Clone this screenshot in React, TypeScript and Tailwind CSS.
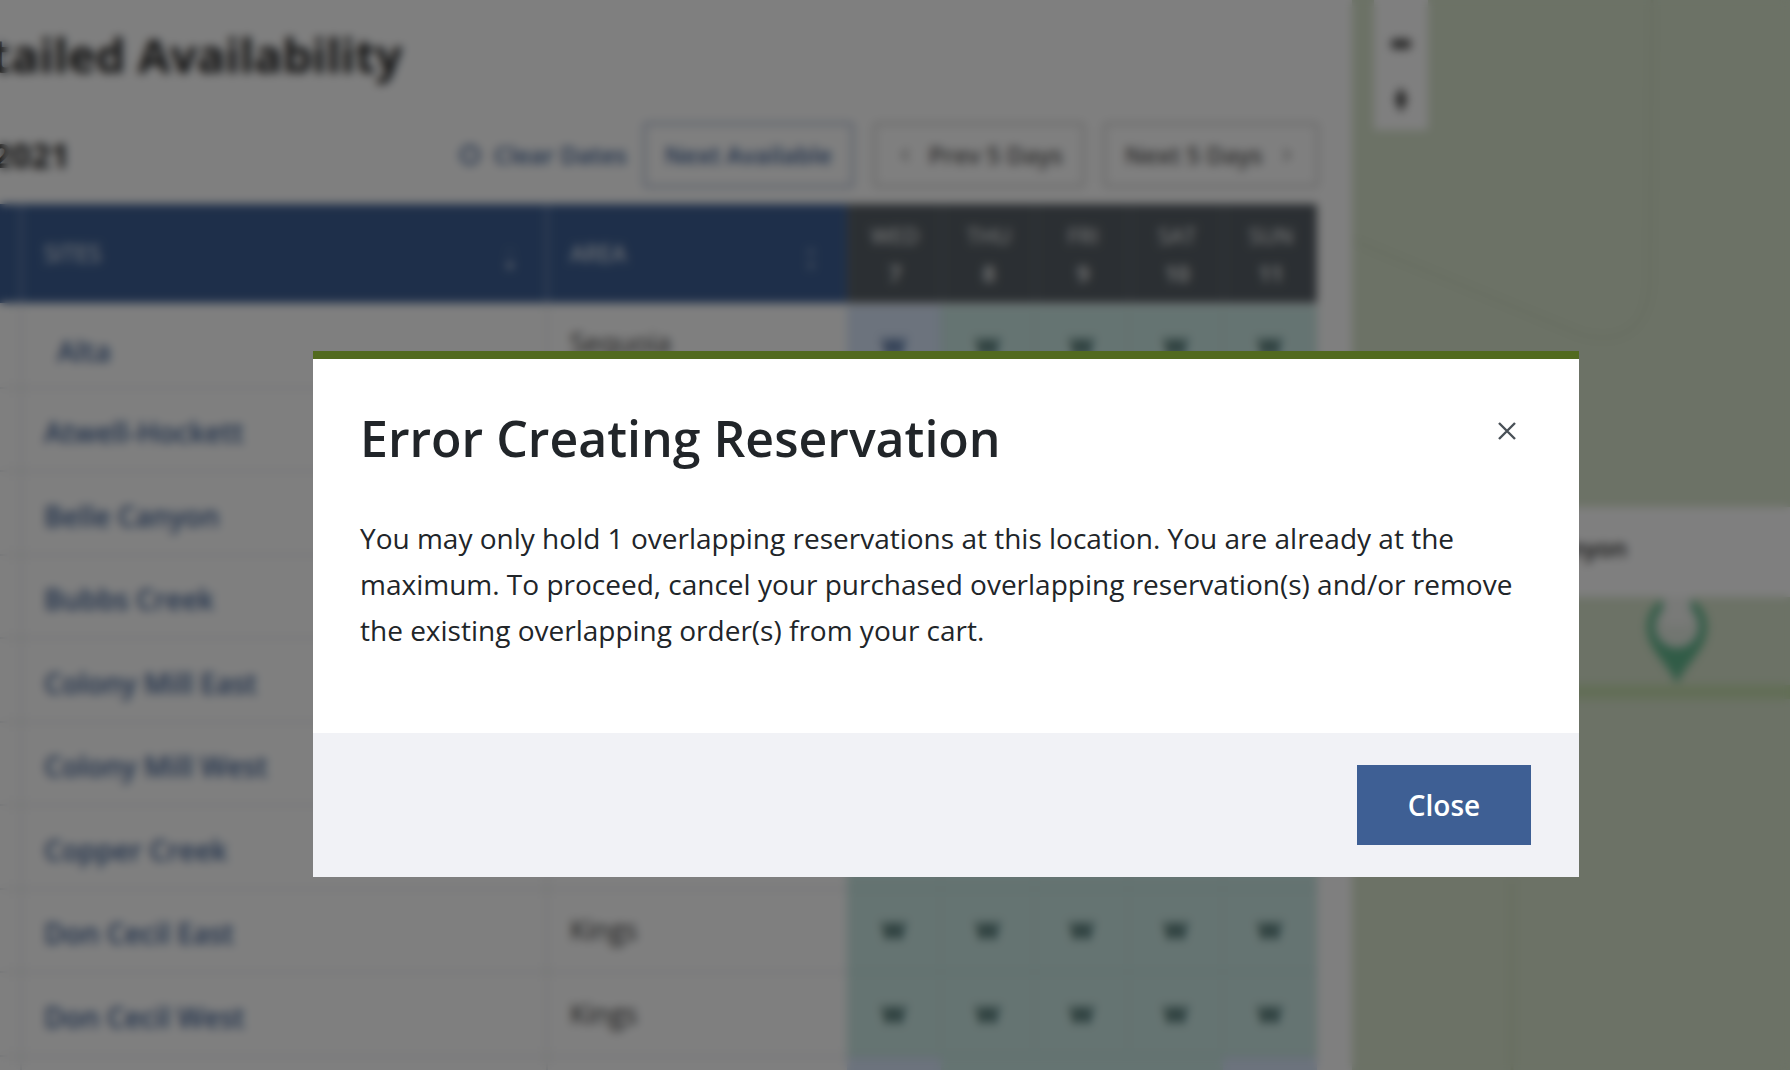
import React from 'react';
import { ChevronLeft, ChevronRight } from 'lucide-react';

const sites = [
  { name: 'Alta', area: 'Sequoia', first: true },
  { name: 'Atwell-Hockett', area: 'Sequoia' },
  { name: 'Belle Canyon', area: 'Sequoia' },
  { name: 'Bubbs Creek', area: 'Kings' },
  { name: 'Colony Mill East', area: 'Sequoia' },
  { name: 'Colony Mill West', area: 'Sequoia' },
  { name: 'Copper Creek', area: 'Kings' },
  { name: 'Don Cecil East', area: 'Kings' },
  { name: 'Don Cecil West', area: 'Kings' },
];

const days = [
  ['WED', '7'],
  ['THU', '8'],
  ['FRI', '9'],
  ['SAT', '10'],
  ['SUN', '11'],
];

function SortIcon({ up }: { up?: boolean }) {
  return (
    <svg width="12" height="28" viewBox="0 0 12 28" className="text-white">
      <path d="M6 2 L10 8 H2 Z" fill="currentColor" opacity={up ? 0.5 : 0.2} />
      <path d="M6 24 L10 17 H2 Z" fill="currentColor" opacity={up ? 0.5 : 0.9} />
    </svg>
  );
}

function TableHeader() {
  return (
    <div className="grid grid-cols-[22px_526px_299px_repeat(5,94px)] h-[99px] mt-[16px] mb-[2px]">
      <div className="bg-[#3d5f94] border-r-2 border-[#7f97bd]" />
      <div className="bg-[#3d5f94] border-r-2 border-[#7f97bd] flex items-center justify-between pl-[22px] pr-[30px] text-white text-[23px]">
        <span>SITES</span>
        <span className="mt-3"><SortIcon /></span>
      </div>
      <div className="bg-[#3d5f94] flex items-center justify-between pl-[22px] pr-[30px] text-white text-[23px]">
        <span>AREA</span>
        <span className="mt-3"><SortIcon up /></span>
      </div>
      {days.map(([d, n]) => (
        <div key={d} className="bg-[#575f66] border-l-2 border-[#666e75] flex flex-col items-center justify-center gap-[14px] text-white text-[22px] leading-6">
          <span>{d}</span>
          <span className="font-semibold">{n}</span>
        </div>
      ))}
    </div>
  );
}

function Row({ name, area, first }: { name: string; area: string; first?: boolean }) {
  return (
    <div className="grid grid-cols-[22px_526px_299px_repeat(5,94px)] h-[83.5px]">
      <div className="border-r-2 border-b-2 border-gray-200" />
      <div className="border-r-2 border-b-2 border-gray-200 flex items-center pl-[22px] pt-[6px]">
        <span className={first ? 'ml-[13px] mt-[4px] text-[#3d5f94] font-semibold text-[28px]' : 'text-[#3d5f94] font-semibold text-[28px]'}>{name}</span>
      </div>
      <div className={first ? 'border-b-2 border-gray-200 flex items-center pl-[22px] pb-[6px] text-[27px] text-[#333]' : 'border-b-2 border-gray-200 flex items-center pl-[22px] text-[27px] text-[#333]'}>
        {area}
      </div>
      {days.map(([d], i) => (
        <div
          key={d}
          className={
            first && i === 0
              ? 'bg-[#d8e6fa] border-b-2 border-r border-[#c6d8ec] flex items-center justify-center text-[#2c4f86] font-bold text-[24px]'
              : 'bg-[#cbe8e4] border-b-2 border-r border-[#bcdcd8] flex items-center justify-center text-[#1f4a48] font-bold text-[24px]'
          }
        >
          W
        </div>
      ))}
    </div>
  );
}

function Availability() {
  return (
    <div className="w-[1352px] shrink-0 bg-white h-full overflow-hidden">
      <h1 className="text-[47px] leading-[60px] font-bold text-[#222] mt-[25px] -ml-[72px] whitespace-nowrap">Detailed Availability</h1>
      <div className="flex items-center mt-[37px] h-[66px]">
        <div className="w-[460px] shrink-0 overflow-hidden">
          <span className="block -ml-[22px] text-[34px] font-bold text-[#222] whitespace-nowrap">/2021</span>
        </div>
        <div className="flex items-center text-[#3d5f94] text-[24px] font-semibold">
          <span className="w-[20px] h-[20px] rounded-full border-[3px] border-[#3d5f94]" />
          <span className="ml-[14px] whitespace-nowrap">Clear Dates</span>
        </div>
        <button className="ml-[16px] w-[211px] h-[66px] border-[3px] border-[#b4c0d6] rounded text-[#3d5f94] text-[24px] font-semibold whitespace-nowrap">Next Available</button>
        <button className="ml-[19px] w-[212px] h-[66px] border-[3px] border-[#d4d4d4] rounded text-[#555] text-[24px] font-semibold flex items-center justify-center gap-[14px] whitespace-nowrap">
          <ChevronLeft size={20} />
          Prev 5 Days
        </button>
        <button className="ml-[18px] w-[216px] h-[66px] border-[3px] border-[#d4d4d4] rounded text-[#555] text-[24px] font-semibold flex items-center justify-center gap-[14px] whitespace-nowrap">
          Next 5 Days
          <ChevronRight size={20} />
        </button>
      </div>
      <TableHeader />
      {sites.map((s) => (
        <Row key={s.name} {...s} />
      ))}
      <div className="grid grid-cols-[22px_526px_299px_repeat(5,94px)] h-[84px]">
        <div className="border-r-2 border-gray-200" />
        <div className="border-r-2 border-gray-200" />
        <div />
        <div className="bg-[#d8e6fa]" />
        <div className="bg-[#cbe8e4]" />
        <div className="bg-[#cbe8e4]" />
        <div className="bg-[#cbe8e4]" />
        <div className="bg-[#d8e6fa]" />
      </div>
    </div>
  );
}

function MapPane() {
  return (
    <div className="relative flex-1 h-full bg-[#d8e4cc] overflow-hidden">
      <svg className="absolute inset-0" width="438" height="1070" viewBox="0 0 438 1070" fill="none">
        <path d="M0 240 L230 335 Q295 350 298 280 L300 0" stroke="#cdd9c0" strokeWidth="3" />
        <path d="M160 880 V1070" stroke="#cbd8b8" strokeWidth="3" />
        <path d="M0 692 H438" stroke="#c4dcac" strokeWidth="14" />
        <path d="M325 684 C 314 660 295 650 295 626 A 30 30 0 0 1 355 626 C 355 650 336 660 325 684 Z" fill="#62b88e" />
        <circle cx="325" cy="626" r="22" fill="#e4ece2" />
        <rect x="311" y="596" width="28" height="30" fill="#f2f4f0" />
      </svg>
      <div className="absolute left-[22px] top-0 w-[54px] h-[130px] bg-white flex flex-col items-center pt-[39px] gap-[36px]">
        <span className="w-[20px] h-[10px] bg-[#555] rounded-sm" />
        <svg width="14" height="30" viewBox="0 0 14 30">
          <path d="M7 2 L13 14 L7 28 L1 14 Z" fill="#444" />
        </svg>
      </div>
      <div className="absolute left-0 right-0 top-[507px] h-[90px] bg-white flex items-center pl-[188px] pb-[8px] text-[24px] font-semibold text-[#222]">
        <span className="whitespace-nowrap">Canyon</span>
      </div>
    </div>
  );
}

function ErrorModal() {
  return (
    <div className="absolute left-[313px] top-[351px] w-[1266px] bg-white border-t-[8px] border-[#526a1f]">
      <div className="pl-[47px] pr-[48px] pt-[41px] h-[374px]">
        <div className="flex items-start justify-between">
          <h2 className="text-[50px] leading-[76px] font-semibold text-[#212529]">Error Creating Reservation</h2>
          <button className="mt-[22px] mr-[15px] text-[#495057]" aria-label="Close">
            <svg width="18" height="18" viewBox="0 0 18 18" fill="none" stroke="currentColor" strokeWidth="2.4">
              <path d="M1 1 L17 17 M17 1 L1 17" />
            </svg>
          </button>
        </div>
        <p className="mt-[39px] text-[28px] leading-[46px] text-[#212529]">
          You may only hold 1 overlapping reservations at this location. You are already at the maximum. To proceed, cancel your purchased overlapping reservation(s) and/or remove the existing overlapping order(s) from your cart.
        </p>
      </div>
      <div className="h-[144px] bg-[#f1f2f6] flex items-center justify-end pr-[48px]">
        <button className="w-[174px] h-[80px] bg-[#3e5f94] text-white text-[28px] font-semibold">Close</button>
      </div>
    </div>
  );
}

export default function App() {
  return (
    <div className="relative w-[1790px] h-[1070px] overflow-hidden font-['Open_Sans',sans-serif]">
      <div className="flex w-full h-full">
        <Availability />
        <MapPane />
      </div>
      <div className="absolute inset-0 bg-black/50 backdrop-blur-[5px]" />
      <ErrorModal />
    </div>
  );
}
